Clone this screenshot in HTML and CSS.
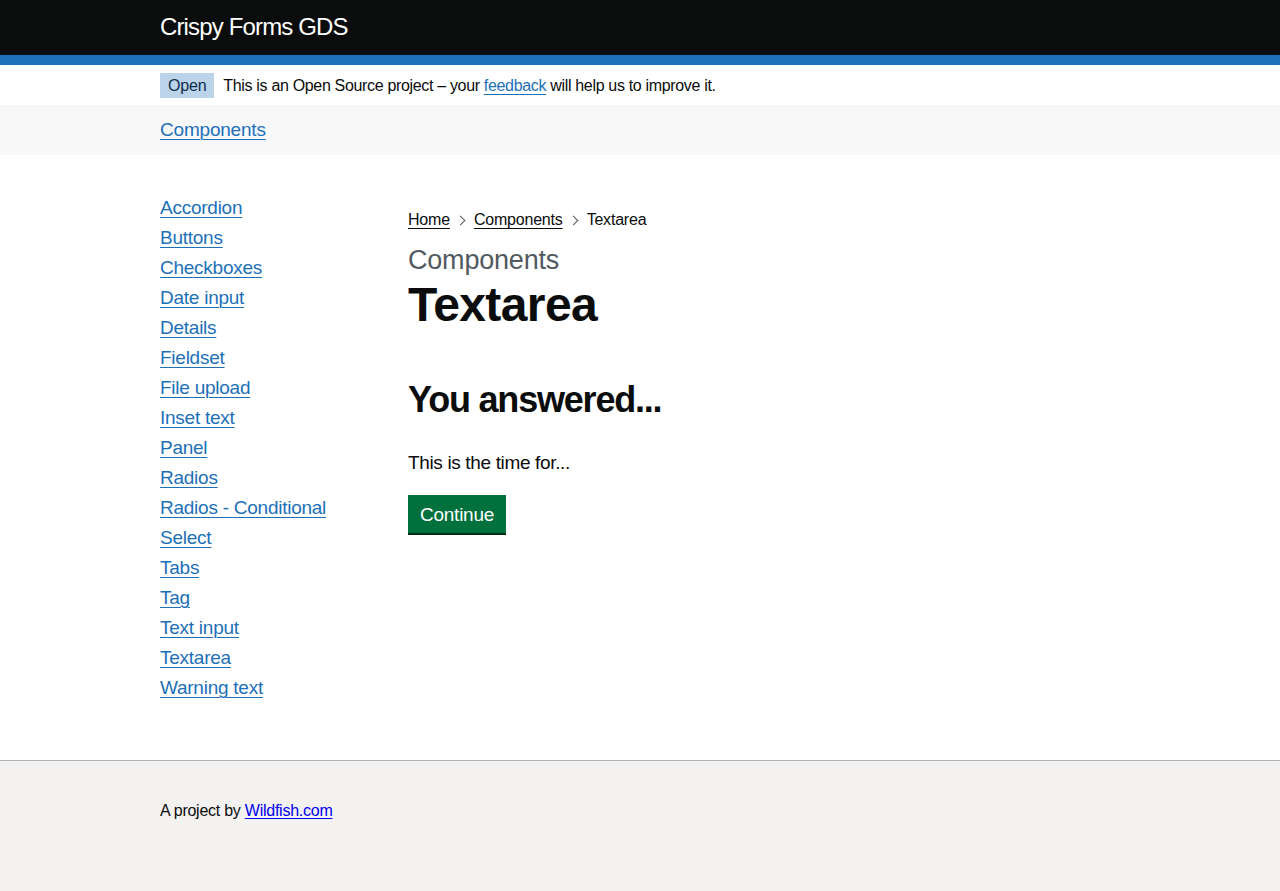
FILE: index.html
```html
<!DOCTYPE html>
<html lang="en">
<head>
<meta charset="utf-8">
<title>Textarea - Crispy Forms GDS</title>
<link rel="stylesheet" href="styles.css">
</head>
<body>
<header class="header">
  <div class="container">
    <a class="product" href="#">Crispy Forms GDS</a>
  </div>
</header>
<div class="phase">
  <div class="container phase-inner">
    <strong class="tag">Open</strong>
    <span class="phase-text">This is an Open Source project – your <a class="link" href="#">feedback</a> will help us to improve it.</span>
  </div>
</div>
<nav class="topnav">
  <div class="container">
    <a class="link" href="#">Components</a>
  </div>
</nav>
<main class="container main">
  <aside class="sidebar">
    <ul class="side-list">
      <li><a class="link" href="#">Accordion</a></li>
      <li><a class="link" href="#">Buttons</a></li>
      <li><a class="link" href="#">Checkboxes</a></li>
      <li><a class="link" href="#">Date input</a></li>
      <li><a class="link" href="#">Details</a></li>
      <li><a class="link" href="#">Fieldset</a></li>
      <li><a class="link" href="#">File upload</a></li>
      <li><a class="link" href="#">Inset text</a></li>
      <li><a class="link" href="#">Panel</a></li>
      <li><a class="link" href="#">Radios</a></li>
      <li><a class="link" href="#">Radios - Conditional</a></li>
      <li><a class="link" href="#">Select</a></li>
      <li><a class="link" href="#">Tabs</a></li>
      <li><a class="link" href="#">Tag</a></li>
      <li><a class="link" href="#">Text input</a></li>
      <li><a class="link" href="#">Textarea</a></li>
      <li><a class="link" href="#">Warning text</a></li>
    </ul>
  </aside>
  <section class="content">
    <ol class="breadcrumbs">
      <li><a class="crumb" href="#">Home</a></li>
      <li class="sep"><a class="crumb" href="#">Components</a></li>
      <li class="sep">Textarea</li>
    </ol>
    <span class="caption">Components</span>
    <h1 class="h1">Textarea</h1>
    <h2 class="h2">You answered...</h2>
    <p class="body">This is the time for...</p>
    <button class="button" type="button">Continue</button>
  </section>
</main>
<footer class="footer">
  <div class="container">
    <p class="footer-text">A project by <a class="footer-link" href="#">Wildfish.com</a></p>
  </div>
</footer>
</body>
</html>
```

FILE: styles.css
```css
* { box-sizing: border-box; }
html, body { margin: 0; padding: 0; }
body {
  font-family: "Liberation Sans", Arial, sans-serif;
  color: #0b0c0c;
  background: #fff;
  -webkit-font-smoothing: antialiased;
}
.container {
  width: 960px;
  margin: 0 auto;
}
.link {
  color: #1d70b8;
  text-decoration: underline;
  text-decoration-thickness: 1px;
  text-underline-offset: 3px;
}

.header {
  background: #0b0c0c;
  height: 65px;
  border-bottom: 10px solid #1d70b8;
}
.product {
  display: block;
  color: #fff;
  text-decoration: none;
  font-size: 24px;
  line-height: 30px;
  padding-top: 12px;
  letter-spacing: -0.85px;
}

.phase {
  padding: 8px 0 7px;
}
.phase-inner {
  display: flex;
  align-items: center;
  font-size: 16px;
  line-height: 20px;
}
.tag {
  display: inline-block;
  background: #bbd4ea;
  color: #0c2d4a;
  font-weight: 400;
  padding: 3px 8px 2px;
  height: 25px;
  margin-right: 9px;
  letter-spacing: -0.2px;
}
.phase-text {
  letter-spacing: -0.33px;
}

.topnav {
  background: #f8f8f8;
  height: 50px;
  padding-top: 12px;
  font-size: 19px;
  line-height: 25px;
  letter-spacing: -0.2px;
}

.main {
  display: flex;
  padding: 40px 0 55px;
}
.sidebar {
  width: 248px;
  flex: none;
}
.side-list {
  list-style: none;
  margin: 0;
  padding: 0;
  font-size: 19px;
  line-height: 25px;
  letter-spacing: -0.25px;
}
.side-list li { margin-bottom: 5px; }
.content {
  flex: 1;
}
.breadcrumbs {
  list-style: none;
  margin: 15px 0 15px;
  padding: 0;
  display: flex;
  font-size: 16px;
  line-height: 20px;
  letter-spacing: -0.2px;
}
.breadcrumbs li { display: flex; align-items: center; }
.sep::before {
  content: "";
  display: inline-block;
  width: 6px;
  height: 6px;
  border-top: 1px solid #505a5f;
  border-right: 1px solid #505a5f;
  transform: rotate(45deg);
  margin: 0 10px 0 7px;
}
.crumb {
  color: #0b0c0c;
  text-decoration: underline;
  text-decoration-thickness: 1px;
  text-underline-offset: 3px;
}
.caption {
  display: block;
  color: #505a5f;
  font-size: 27px;
  line-height: 30px;
  margin-bottom: 5px;
  letter-spacing: -0.2px;
}
.h1 {
  margin: 0 0 50px;
  font-size: 48px;
  line-height: 50px;
  font-weight: 700;
  letter-spacing: -0.6px;
}
.h2 {
  margin: 0 0 30px;
  font-size: 36px;
  line-height: 40px;
  font-weight: 700;
  letter-spacing: -1.2px;
}
.body {
  margin: 0 0 20px;
  font-size: 19px;
  line-height: 25px;
  letter-spacing: -0.35px;
}
.button {
  display: block;
  font-family: inherit;
  font-size: 19px;
  line-height: 19px;
  letter-spacing: -0.25px;
  color: #fff;
  background: #00703c;
  border: 2px solid transparent;
  border-radius: 0;
  box-shadow: 0 2px 0 #002d18;
  padding: 8px 10px 7px;
  cursor: pointer;
}

.footer {
  background: #f3f2f1;
  border-top: 1px solid #b1b4b6;
  height: 131px;
  padding-top: 40px;
}
.footer-text {
  margin: 0;
  font-size: 16px;
  line-height: 20px;
  letter-spacing: -0.25px;
}
.footer-link {
  color: #0000ee;
  text-decoration: underline;
  text-underline-offset: 2px;
}
```
